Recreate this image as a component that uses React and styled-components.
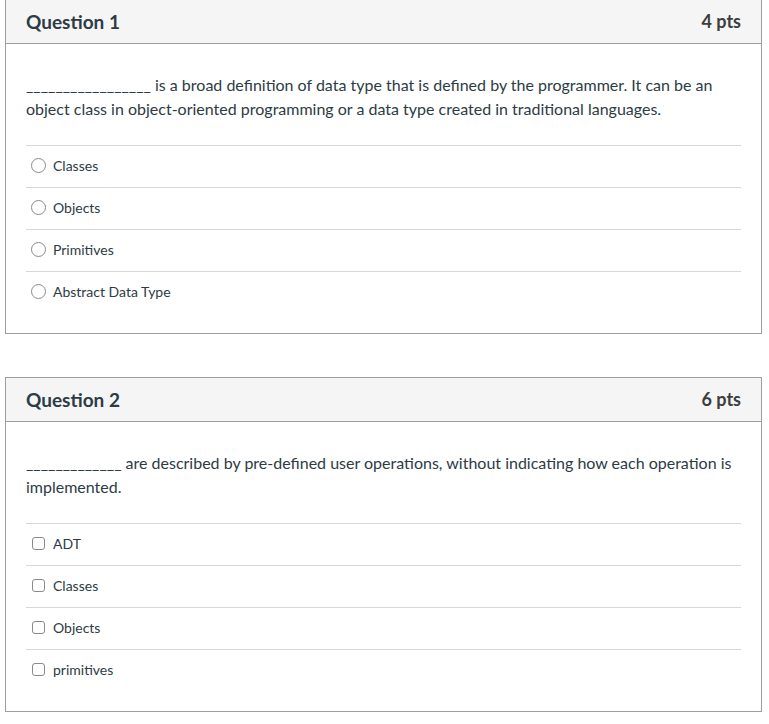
import React from 'react';
import styled, { createGlobalStyle } from 'styled-components';

const GlobalStyle = createGlobalStyle`
  html, body {
    margin: 0;
    padding: 0;
    background: #fff;
  }
  body {
    font-family: Lato, "Open Sans", "Liberation Sans", sans-serif;
    color: #2d3b45;
  }
`;

const questions = [
  {
    title: 'Question 1',
    points: '4 pts',
    blank: '_________________',
    text: ' is a broad definition of data type that is defined by the programmer. It can be an object class in object-oriented programming or a data type created in traditional languages.',
    kind: 'radio',
    answers: ['Classes', 'Objects', 'Primitives', 'Abstract Data Type'],
  },
  {
    title: 'Question 2',
    points: '6 pts',
    blank: '_____________',
    text: ' are described by pre-defined user operations, without indicating how each operation is implemented.',
    kind: 'checkbox',
    answers: ['ADT', 'Classes', 'Objects', 'primitives'],
  },
];

const App = () => {
  return (
    <>
      <GlobalStyle />
      <Page>
        {questions.map((q) => (
          <Card key={q.title}>
            <Header>
              <Title>{q.title}</Title>
              <Points>{q.points}</Points>
            </Header>
            <Body>
              <QuestionText>
                {q.blank}
                {q.text}
              </QuestionText>
              <Answers>
                {q.answers.map((a) => (
                  <Answer key={a}>
                    <Mark $kind={q.kind} />
                    <AnswerLabel>{a}</AnswerLabel>
                  </Answer>
                ))}
              </Answers>
            </Body>
          </Card>
        ))}
      </Page>
    </>
  );
};
export default App;

const Page = styled.div`
  display: flex;
  flex-direction: column;
  gap: 43px;
  padding: 0 7px 0 5px;
  margin-top: -1px;
`;

const Card = styled.div`
  border: 1px solid #9e9e9e;
  background: #fff;
`;

const Header = styled.div`
  display: flex;
  align-items: center;
  justify-content: space-between;
  height: 43px;
  padding: 0 20px 1px;
  box-sizing: border-box;
  height: 44px;
  background: #f5f5f5;
  border-bottom: 1px solid #9e9e9e;
`;

const Title = styled.div`
  font-size: 19px;
  font-weight: 700;
  color: #2d3b45;
`;

const Points = styled.div`
  font-size: 18px;
  font-weight: 700;
  color: #3d3d3d;
`;

const Body = styled.div`
  padding: 29px 20px 20px;
`;

const QuestionText = styled.div`
  font-size: 16px;
  line-height: 24px;
  color: #2d3b45;
  margin-bottom: 24px;
`;

const Answers = styled.div`
  display: flex;
  flex-direction: column;
`;

const Answer = styled.div`
  display: flex;
  align-items: center;
  box-sizing: border-box;
  height: 42px;
  padding: 0 0 2px 5px;
  border-top: 1px solid #d7d7d7;
`;

const Mark = styled.span`
  box-sizing: border-box;
  flex: none;
  width: ${(p) => (p.$kind === 'radio' ? '15px' : '13px')};
  height: ${(p) => (p.$kind === 'radio' ? '15px' : '13px')};
  margin-left: ${(p) => (p.$kind === 'radio' ? '0' : '1px')};
  margin-right: ${(p) => (p.$kind === 'radio' ? '7px' : '8px')};
  border: 1px solid #8a8a8a;
  border-radius: ${(p) => (p.$kind === 'radio' ? '50%' : '3px')};
  background: #fff;
`;

const AnswerLabel = styled.span`
  font-size: 14px;
  color: #2d3b45;
`;
